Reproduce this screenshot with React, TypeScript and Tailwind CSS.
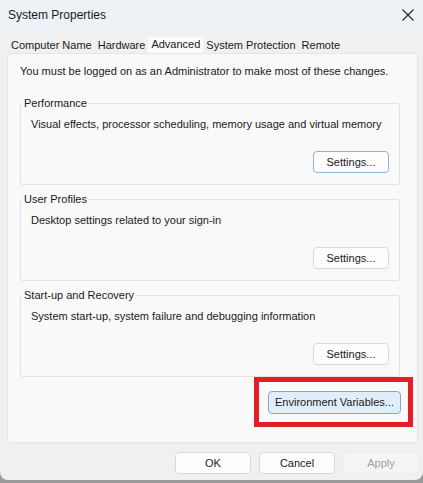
import React from 'react';

const font = { fontFamily: '"Liberation Sans", Arial, sans-serif' };

const tabs = ['Computer Name', 'Hardware', 'Advanced', 'System Protection', 'Remote'];

const groups = [
  { title: 'Performance', desc: 'Visual effects, processor scheduling, memory usage and virtual memory' },
  { title: 'User Profiles', desc: 'Desktop settings related to your sign-in' },
  { title: 'Start-up and Recovery', desc: 'System start-up, system failure and debugging information' },
];

const WinButton: React.FC<{ label: string; focused?: boolean; disabled?: boolean; className?: string }> = ({
  label,
  focused,
  disabled,
  className = '',
}) => (
  <button
    className={`h-[22px] w-[76px] rounded-[4px] border text-[11px] leading-none ${
      focused
        ? 'border-[#8fb3d9] bg-[#fdfdfd] text-[#1a1a1a]'
        : disabled
        ? 'border-[#ececec] bg-[#f5f5f5] text-[#a0a0a0]'
        : 'border-[#dadada] bg-[#fdfdfd] text-[#1a1a1a]'
    } ${className}`}
  >
    {label}
  </button>
);

export default function App() {
  return (
    <div className="w-[423px] h-[483px] bg-[#9a9a9a] overflow-hidden" style={font}>
      <div className="relative w-[423px] h-[480px] bg-[#f0f0f0] rounded-b-[8px] flex flex-col">
        {/* title bar */}
        <div className="h-[30px] bg-[#eef1f6] flex items-center justify-between pl-[8px] pr-[7px]">
          <span className="text-[12px] text-[#1a1a1a]">System Properties</span>
          <svg width="16" height="16" viewBox="0 0 16 16" className="text-[#222]">
            <path d="M2.5 2.5 L13.5 13.5 M13.5 2.5 L2.5 13.5" stroke="currentColor" strokeWidth="1.1" fill="none" />
          </svg>
        </div>

        {/* tabs */}
        <div className="flex items-end h-[23px] pl-[8px]">
          {tabs.map((t) => (
            <div
              key={t}
              className={`px-[3px] text-[11px] text-[#1a1a1a] ${
                t === 'Advanced' ? 'h-[16px] leading-[14px] bg-[#fbfbfb]' : 'h-[14px] leading-[14px] mb-[1px]'
              }`}
            >
              {t}
            </div>
          ))}
        </div>

        {/* tab panel */}
        <div className="ml-[7px] mr-[5px] h-[390px] bg-[#f9f9f9] border border-[#e6e6e6] rounded-[3px] pl-[12px] pr-[17px] pt-[10px] pb-[28px] flex flex-col">
          <p className="text-[11px] leading-[14px] text-[#1a1a1a] whitespace-nowrap">
            You must be logged on as an Administrator to make most of these changes.
          </p>

          <div className="mt-[18px] flex flex-col gap-[7px]">
            {groups.map((g, i) => (
              <fieldset key={g.title} className="h-[89px] border border-[#e3e3e3] rounded-[3px] m-0 p-0 min-w-0">
                <legend className="ml-[2px] px-[1px] text-[11px] leading-[14px] text-[#1a1a1a]">{g.title}</legend>
                <div className="h-[74px] flex flex-col pl-[10px] pr-[10px] pt-[7px] pb-[11px]">
                  <p className="text-[11px] leading-[14px] text-[#1a1a1a] whitespace-nowrap">{g.desc}</p>
                  <div className="mt-auto flex justify-end">
                    <WinButton label="Settings..." focused={i === 0} />
                  </div>
                </div>
              </fieldset>
            ))}
          </div>

          <div className="mt-[14px] flex justify-end">
            <button className="h-[23px] w-[133px] mr-[-1px] rounded-[4px] border border-[#7eaad6] bg-[#e1eef9] text-[11px] text-[#1a1a1a]">
              Environment Variables...
            </button>
          </div>
        </div>

        {/* bottom buttons */}
        <div className="flex justify-end gap-[8px] pr-[4px] mt-[9px]">
          <WinButton label="OK" />
          <WinButton label="Cancel" />
          <WinButton label="Apply" disabled />
        </div>

        {/* red annotation box */}
        <div className="absolute left-[254px] top-[377px] w-[159px] h-[50px] border-[5px] border-[#e31e25]" />
      </div>
    </div>
  );
}
